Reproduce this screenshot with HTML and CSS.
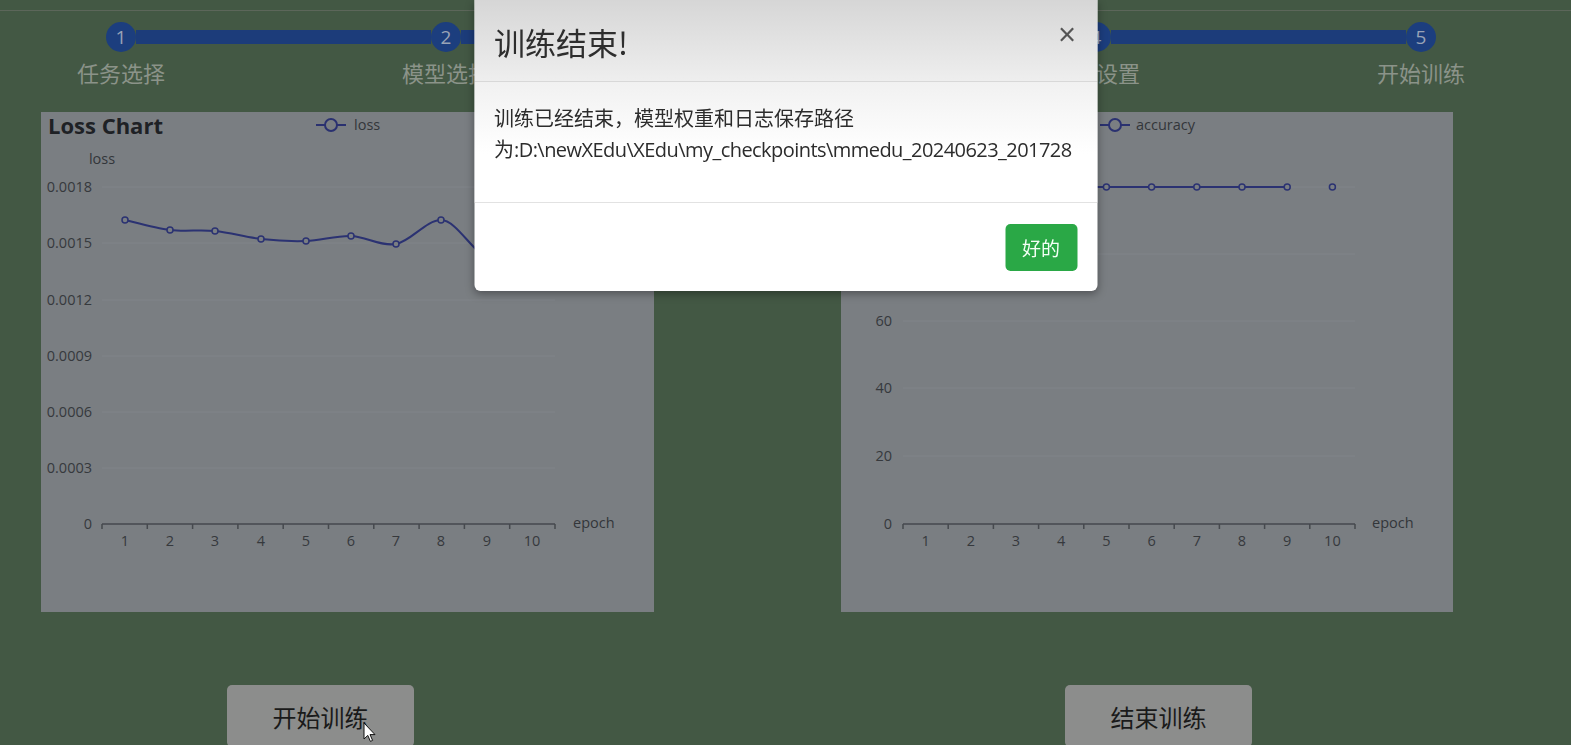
FILE: index.html
```html
<!DOCTYPE html>
<html lang="zh-CN">
<head>
<meta charset="utf-8">
<title>训练</title>
<link rel="stylesheet" href="styles.css">
</head>
<body>
<div class="page">
  <div class="topbar"></div>
  <div class="stepper">
    <div class="step"><div class="dot">1</div><div class="label">任务选择</div></div>
    <div class="bar"></div>
    <div class="step"><div class="dot">2</div><div class="label">模型选择</div></div>
    <div class="bar"></div>
    <div class="step"><div class="dot">3</div><div class="label">数据集选择</div></div>
    <div class="bar"></div>
    <div class="step"><div class="dot">4</div><div class="label">参数设置</div></div>
    <div class="bar"></div>
    <div class="step"><div class="dot">5</div><div class="label">开始训练</div></div>
  </div>

  <div class="charts">
    <div class="panel">
      <svg class="chart" width="613" height="500" viewBox="0 0 613 500">
        <text class="c-title" x="7" y="22">Loss Chart</text>
        <g class="legend">
          <line x1="275" y1="13" x2="305" y2="13"/>
          <circle cx="290" cy="13" r="6"/>
        </g>
        <text class="c-leg" x="313" y="18">loss</text>
        <text class="c-name" x="61" y="52" text-anchor="middle">loss</text>
        <g class="grid">
          <line x1="61" x2="514" y1="75" y2="75"/>
          <line x1="61" x2="514" y1="131" y2="131"/>
          <line x1="61" x2="514" y1="188" y2="188"/>
          <line x1="61" x2="514" y1="244" y2="244"/>
          <line x1="61" x2="514" y1="300" y2="300"/>
          <line x1="61" x2="514" y1="356" y2="356"/>
        </g>
        <g class="c-lab" text-anchor="end">
          <text x="51" y="80">0.0018</text>
          <text x="51" y="136">0.0015</text>
          <text x="51" y="193">0.0012</text>
          <text x="51" y="249">0.0009</text>
          <text x="51" y="305">0.0006</text>
          <text x="51" y="361">0.0003</text>
          <text x="51" y="417">0</text>
        </g>
        <g class="axis">
          <line x1="61" x2="514" y1="412" y2="412"/>
          <path d="M61 412v5M106.3 412v5M151.6 412v5M196.9 412v5M242.2 412v5M287.5 412v5M332.8 412v5M378.1 412v5M423.4 412v5M468.7 412v5M514 412v5"/>
        </g>
        <g class="c-lab" text-anchor="middle">
          <text x="84" y="434">1</text><text x="129" y="434">2</text><text x="174" y="434">3</text>
          <text x="220" y="434">4</text><text x="265" y="434">5</text><text x="310" y="434">6</text>
          <text x="355" y="434">7</text><text x="400" y="434">8</text><text x="446" y="434">9</text>
          <text x="491" y="434">10</text>
        </g>
        <text class="c-name" x="532" y="416">epoch</text>
        <path class="series" d="M84 108C91.5 109.7 114 116.2 129 118C144 119.8 158.8 117.5 174 119C189.2 120.5 204.8 125.3 220 127C235.2 128.7 250 129.5 265 129C280 128.5 295 123.5 310 124C325 124.5 340 134.7 355 132C370 129.3 385 108 400 108C415 108 430.8 138.7 446 146C461.2 153.3 483.5 151 491 152"/>
        <g class="marks">
          <circle cx="84" cy="108" r="3"/><circle cx="129" cy="118" r="3"/><circle cx="174" cy="119" r="3"/>
          <circle cx="220" cy="127" r="3"/><circle cx="265" cy="129" r="3"/><circle cx="310" cy="124" r="3"/>
          <circle cx="355" cy="132" r="3"/><circle cx="400" cy="108" r="3"/><circle cx="446" cy="146" r="3"/>
          <circle cx="491" cy="152" r="3"/>
        </g>
      </svg>
    </div>
    <div class="panel">
      <svg class="chart" width="612" height="500" viewBox="0 0 612 500">
        <g class="legend">
          <line x1="259" y1="13" x2="289" y2="13"/>
          <circle cx="274" cy="13" r="6"/>
        </g>
        <text class="c-leg" x="295" y="18">accuracy</text>
        <g class="grid">
          <line x1="62" x2="514" y1="75" y2="75"/>
          <line x1="62" x2="514" y1="142" y2="142"/>
          <line x1="62" x2="514" y1="209" y2="209"/>
          <line x1="62" x2="514" y1="276" y2="276"/>
          <line x1="62" x2="514" y1="344" y2="344"/>
        </g>
        <g class="c-lab" text-anchor="end">
          <text x="51" y="214">60</text>
          <text x="51" y="281">40</text>
          <text x="51" y="349">20</text>
          <text x="51" y="417">0</text>
        </g>
        <g class="axis">
          <line x1="62" x2="514" y1="412" y2="412"/>
          <path d="M62 412v5M107.2 412v5M152.4 412v5M197.6 412v5M242.8 412v5M288 412v5M333.2 412v5M378.4 412v5M423.6 412v5M468.8 412v5M514 412v5"/>
        </g>
        <g class="c-lab" text-anchor="middle">
          <text x="84.6" y="434">1</text><text x="129.8" y="434">2</text><text x="175" y="434">3</text>
          <text x="220.2" y="434">4</text><text x="265.4" y="434">5</text><text x="310.6" y="434">6</text>
          <text x="355.8" y="434">7</text><text x="401" y="434">8</text><text x="446.2" y="434">9</text>
          <text x="491.4" y="434">10</text>
        </g>
        <text class="c-name" x="531" y="416">epoch</text>
        <path class="series" d="M84.6 75H446.2"/>
        <g class="marks">
          <circle cx="84.6" cy="75" r="3"/><circle cx="129.8" cy="75" r="3"/><circle cx="175" cy="75" r="3"/>
          <circle cx="220.2" cy="75" r="3"/><circle cx="265.4" cy="75" r="3"/><circle cx="310.6" cy="75" r="3"/>
          <circle cx="355.8" cy="75" r="3"/><circle cx="401" cy="75" r="3"/><circle cx="446.2" cy="75" r="3"/>
          <circle cx="491.4" cy="75" r="3"/>
        </g>
      </svg>
    </div>
  </div>

  <div class="actions">
    <button class="btn">开始训练</button>
    <button class="btn">结束训练</button>
  </div>
</div>

<div class="modal">
  <div class="modal-header">
    <h4 class="modal-title">训练结束!</h4>
    <span class="close">×</span>
  </div>
  <div class="modal-body">
    <p>训练已经结束，模型权重和日志保存路径为<span class="path">:D:\newXEdu\XEdu\my_checkpoints\mmedu_20240623_201728</span></p>
  </div>
  <div class="modal-footer">
    <button class="ok">好的</button>
  </div>
</div>

<svg class="cursor" width="13" height="21" viewBox="0 0 13 21">
  <path d="M1 1V17L4.8 13.4L7.4 19.4L9.6 18.4L7 12.6H12Z" fill="#fff" stroke="#111" stroke-width="1"/>
</svg>
</body>
</html>
```

FILE: styles.css
```css
* { box-sizing: border-box; }

html, body {
  margin: 0;
  padding: 0;
  height: 100%;
  overflow: hidden;
}

body {
  background: #435844;
  font-family: "Open Sans", "Noto Sans CJK SC", sans-serif;
}

.page {
  height: 745px;
}

.topbar {
  height: 11px;
  border-bottom: 1px solid #5c665a;
}

.stepper {
  display: flex;
  align-items: flex-start;
  padding-left: 106px;
  margin-top: 11px;
}

.step {
  width: 30px;
  display: flex;
  flex-direction: column;
  align-items: center;
}

.dot {
  width: 30px;
  height: 30px;
  border-radius: 50%;
  background: #1c3e7e;
  color: #99a3b6;
  font-family: "Open Sans", sans-serif;
  font-size: 19px;
  line-height: 30px;
  text-align: center;
}

.label {
  margin-top: 5px;
  white-space: nowrap;
  font-family: "Noto Sans CJK SC", sans-serif;
  font-size: 22px;
  line-height: 30px;
  color: #8b9389;
}

.bar {
  width: 295px;
  height: 14px;
  margin-top: 8px;
  background: #1c3c7a;
}

.charts {
  display: flex;
  gap: 187px;
  padding-left: 41px;
  margin-top: 25px;
}

.panel {
  width: 613px;
  height: 500px;
  background: #7a7e82;
}

.panel + .panel {
  width: 612px;
}

.chart {
  display: block;
  font-family: "Open Sans", sans-serif;
}

.c-title {
  font-size: 22px;
  font-weight: 700;
  fill: #1e2125;
}

.c-leg, .c-name {
  font-size: 14.5px;
  fill: #33363a;
}

.c-lab {
  font-size: 14.5px;
  fill: #36393d;
}

.legend line {
  stroke: #2a3170;
  stroke-width: 2;
}

.legend circle {
  fill: #7a7e82;
  stroke: #2a3170;
  stroke-width: 2;
}

.grid line {
  stroke: #808489;
  stroke-width: 1;
}

.axis line, .axis path {
  stroke: #46494e;
  stroke-width: 1.5;
  fill: none;
}

.series {
  fill: none;
  stroke: #2b3272;
  stroke-width: 2;
}

.marks circle {
  fill: #7a7e82;
  stroke: #2b3272;
  stroke-width: 1.5;
}

.actions {
  display: flex;
  gap: 651px;
  padding-left: 227px;
  margin-top: 73px;
}

.btn {
  width: 187px;
  height: 62px;
  border: none;
  border-radius: 5px;
  background: #8c8d8c;
  color: #1a1a1a;
  font-family: "Noto Sans CJK SC", sans-serif;
  font-size: 24px;
  padding: 0;
}

.modal {
  position: fixed;
  top: 0;
  left: 50%;
  transform: translateX(-50%);
  width: 623px;
  background: #fff;
  border-radius: 0 0 6px 6px;
  box-shadow: 0 3px 9px rgba(0, 0, 0, 0.35);
  overflow: hidden;
}

.modal-header {
  display: flex;
  justify-content: space-between;
  align-items: flex-start;
  height: 82px;
  padding: 22px 21px 0 20px;
  border-bottom: 1px solid #d8d8d8;
  background: linear-gradient(#d6d6d6, #eeeeee);
}

.modal-title {
  margin: 0;
  font-family: "Noto Sans CJK SC", sans-serif;
  font-weight: 400;
  font-size: 31px;
  line-height: 40px;
  color: #2e2e2e;
}

.close {
  font-family: "Liberation Sans", sans-serif;
  font-size: 31px;
  line-height: 26px;
  color: #555;
  font-weight: 400;
}

.modal-body {
  height: 121px;
  padding: 21px 22px 0 20px;
  border-bottom: 1px solid #e2e2e2;
  background: linear-gradient(#f1f1f1, #ffffff 60%);
}

.modal-body p {
  margin: 0;
  font-family: "Open Sans", "Noto Sans CJK SC", sans-serif;
  font-size: 20px;
  line-height: 31px;
  color: #2c2c2c;
}

.path {
  letter-spacing: -0.55px;
}

.modal-footer {
  display: flex;
  justify-content: flex-end;
  padding: 21px 20px 20px;
}

.ok {
  width: 72px;
  height: 47px;
  border: none;
  border-radius: 5px;
  background: #2aa846;
  color: #f3fff5;
  font-family: "Noto Sans CJK SC", sans-serif;
  font-size: 19px;
  padding: 0;
}

.cursor {
  position: fixed;
  left: 363px;
  top: 722px;
}
```
